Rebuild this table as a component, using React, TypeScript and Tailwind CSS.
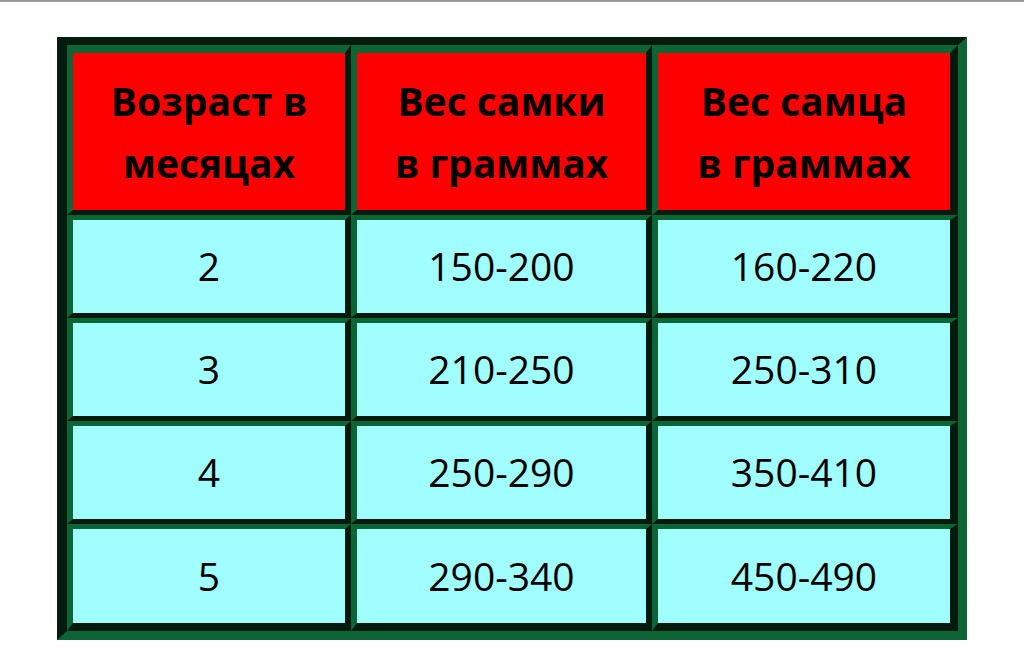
const rows = [
  ["2", "150-200", "160-220"],
  ["3", "210-250", "250-310"],
  ["4", "250-290", "350-410"],
  ["5", "290-340", "450-490"],
];

const head = [
  ["Возраст в", "месяцах"],
  ["Вес самки", "в граммах"],
  ["Вес самца", "в граммах"],
];

const colW = ["w-[284px]", "w-[301px]", "w-[306px]"];

export default function App() {
  return (
    <div className="w-[1024px] h-[671px] bg-white font-['Open_Sans','Noto_Sans',sans-serif] text-black">
      <div className="h-[2px] bg-[#9a9a9a]" />
      <div className="pt-[35px] pl-[57px]">
        <table className="border-separate border-spacing-0 border-solid border-t-[8px] border-l-[10px] border-r-[9px] border-b-[9px] border-t-[#031b0c] border-l-[#031b0c] border-r-[#0b6535] border-b-[#0b6535]">
          <tbody>
            <tr>
              {head.map((h, i) => (
                <th
                  key={i}
                  className={`${colW[i]} h-[170px] p-0 bg-[#ff0000] border-solid border-t-[8px] border-b-[5px] border-l-[6px] ${i === 2 ? "border-r-[8px]" : "border-r-[6px]"} border-t-[#0b6535] border-l-[#0b6535] border-r-[#031b0c] border-b-[#031b0c] text-[39px] font-bold leading-[62px] text-center align-middle`}
                >
                  <div>{h[0]}</div>
                  <div>{h[1]}</div>
                </th>
              ))}
            </tr>
            {rows.map((r, ri) => (
              <tr key={ri}>
                {r.map((c, ci) => (
                  <td
                    key={ci}
                    className={`${colW[ci]} ${ri === 3 ? "h-[107px] border-b-[8px]" : "h-[103px] border-b-[5px]"} p-0 bg-[#a0fffe] border-solid border-t-[5px] border-l-[6px] ${ci === 2 ? "border-r-[8px]" : "border-r-[6px]"} border-t-[#0b6535] border-l-[#0b6535] border-r-[#031b0c] border-b-[#031b0c] text-[39px] font-normal text-center align-middle`}
                  >
                    {c}
                  </td>
                ))}
              </tr>
            ))}
          </tbody>
        </table>
      </div>
    </div>
  );
}
